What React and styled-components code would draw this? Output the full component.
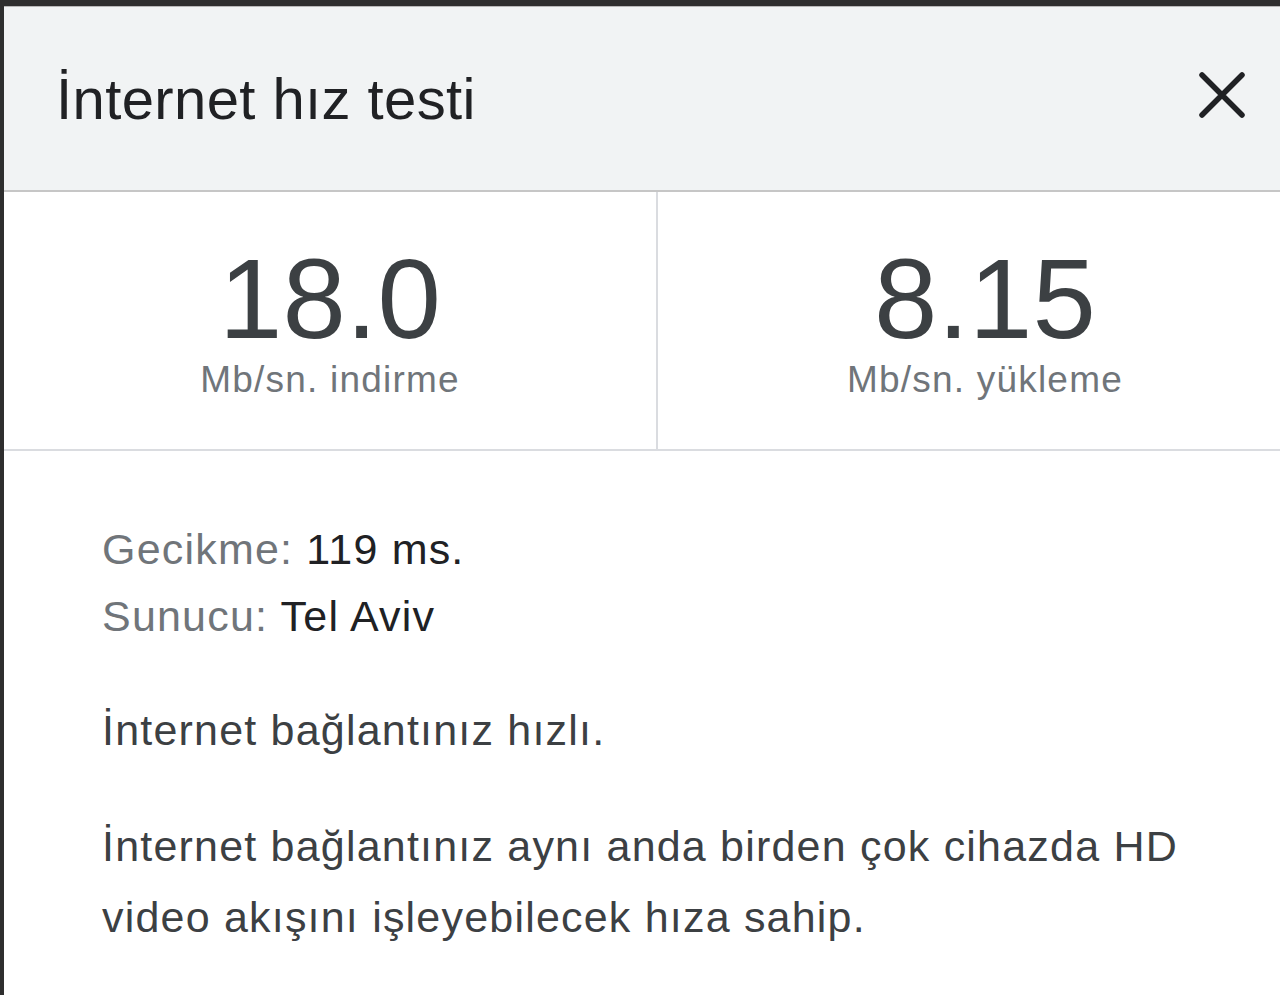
import React from "react";
import styled, { createGlobalStyle } from "styled-components";

const Global = createGlobalStyle`
  html, body { margin: 0; padding: 0; background: #ffffff; overflow: hidden; }
  body { font-family: "Liberation Sans", Arial, sans-serif; }
`;

const Panel = styled.div`
  width: 1312px;
  height: 995px;
  box-sizing: border-box;
  border-top: 6px solid #2e2e2e;
  border-left: 4px solid #2e2e2e;
  background: #ffffff;
`;

const Header = styled.div`
  height: 186px;
  box-sizing: border-box;
  border-top: 1px solid #b8b8b8;
  border-bottom: 2px solid #c6c6c6;
  background: #f1f3f4;
  display: flex;
  align-items: center;
  justify-content: space-between;
  padding: 0 66px 0 52px;
`;

const Title = styled.h1`
  margin: 0;
  font-weight: normal;
  font-size: 58px;
  letter-spacing: 0.4px;
  color: #202124;
`;

const CloseButton = styled.button`
  border: 0;
  background: transparent;
  padding: 0;
  margin-top: -8px;
  width: 48px;
  height: 48px;
  display: flex;
  align-items: center;
  justify-content: center;
  color: #202124;
`;

const Stats = styled.div`
  display: grid;
  grid-template-columns: 654px 1fr;
  border-bottom: 2px solid #dadce0;
`;

const Stat = styled.div`
  display: flex;
  flex-direction: column;
  align-items: center;
  padding: 50px 0 47px;
  border-right: ${(p) => (p.$divider ? "2px solid #dadce0" : "0")};
`;

const Value = styled.div`
  font-size: 114px;
  line-height: 114px;
  color: #3c4043;
`;

const Unit = styled.div`
  font-size: 37px;
  line-height: 44px;
  letter-spacing: 1.2px;
  color: #70757a;
  margin-top: 2px;
`;

const Body = styled.div`
  padding: 65px 0 0 98px;
  width: 1110px;
  font-size: 43px;
  letter-spacing: 1.2px;
  color: #3c4043;
`;

const InfoLine = styled.div`
  line-height: 67px;
`;

const InfoLabel = styled.span`
  color: #70757a;
`;

const InfoValue = styled.span`
  color: #202124;
`;

const Paragraph = styled.p`
  margin: 45px 0 0;
  line-height: 71px;
  color: #3c4043;
`;

export default function App() {
  return (
    <>
      <Global />
      <Panel>
        <Header>
          <Title>İnternet hız testi</Title>
          <CloseButton aria-label="Kapat">
            <svg width="46" height="46" viewBox="0 0 46 46">
              <path
                d="M3 3 L43 43 M43 3 L3 43"
                stroke="currentColor"
                strokeWidth="5.5"
                strokeLinecap="round"
                fill="none"
              />
            </svg>
          </CloseButton>
        </Header>
        <Stats>
          <Stat $divider>
            <Value>18.0</Value>
            <Unit>Mb/sn. indirme</Unit>
          </Stat>
          <Stat>
            <Value>8.15</Value>
            <Unit>Mb/sn. yükleme</Unit>
          </Stat>
        </Stats>
        <Body>
          <InfoLine>
            <InfoLabel>Gecikme: </InfoLabel>
            <InfoValue>119 ms.</InfoValue>
          </InfoLine>
          <InfoLine>
            <InfoLabel>Sunucu: </InfoLabel>
            <InfoValue>Tel Aviv</InfoValue>
          </InfoLine>
          <Paragraph>İnternet bağlantınız hızlı.</Paragraph>
          <Paragraph>
            İnternet bağlantınız aynı anda birden çok cihazda HD video akışını
            işleyebilecek hıza sahip.
          </Paragraph>
        </Body>
      </Panel>
    </>
  );
}
